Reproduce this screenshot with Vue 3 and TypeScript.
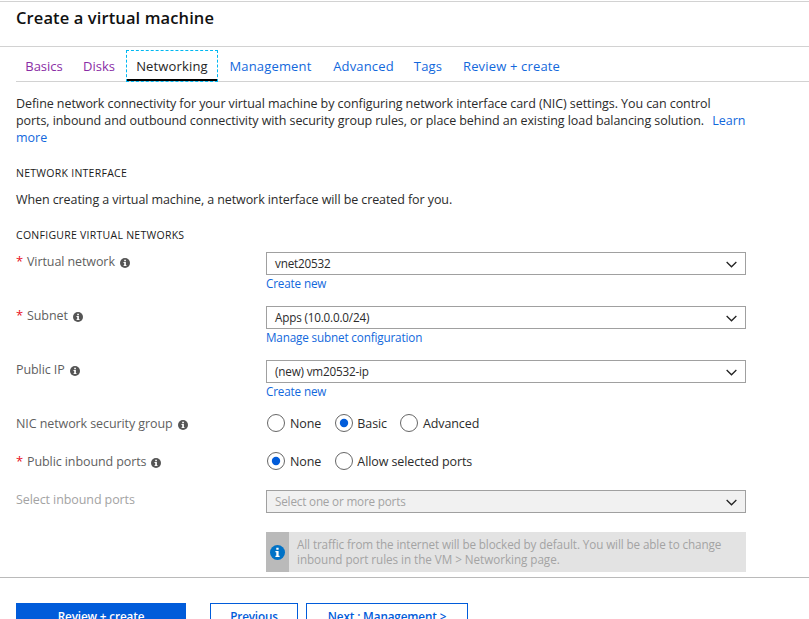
<script setup lang="ts">
import { ref } from 'vue'

interface Tab { label: string; width: number; state: 'visited' | 'current' | 'link' }
interface SelectField { label: string; required: boolean; value: string; link: string }
interface RadioField { label: string; required: boolean; name: string; options: string[] }

const tabs: Tab[] = [
  { label: 'Basics', width: 56, state: 'visited' },
  { label: 'Disks', width: 54, state: 'visited' },
  { label: 'Networking', width: 92, state: 'current' },
  { label: 'Management', width: 105, state: 'link' },
  { label: 'Advanced', width: 81, state: 'link' },
  { label: 'Tags', width: 48, state: 'link' },
  { label: 'Review + create', width: 119, state: 'link' },
]

const selects: SelectField[] = [
  { label: 'Virtual network', required: true, value: 'vnet20532', link: 'Create new' },
  { label: 'Subnet', required: true, value: 'Apps (10.0.0.0/24)', link: 'Manage subnet configuration' },
  { label: 'Public IP', required: false, value: '(new) vm20532-ip', link: 'Create new' },
]

const radios: RadioField[] = [
  { label: 'NIC network security group', required: false, name: 'nsg', options: ['None', 'Basic', 'Advanced'] },
  { label: 'Public inbound ports', required: true, name: 'ports', options: ['None', 'Allow selected ports'] },
]

const chosen = ref<Record<string, string>>({ nsg: 'Basic', ports: 'None' })
</script>

<template>
  <div class="page">
    <header class="title"><h1>Create a virtual machine</h1></header>

    <nav class="tabs">
      <a v-for="t in tabs" :key="t.label" class="tab" :class="t.state" :style="{ width: t.width + 'px' }">{{ t.label }}</a>
    </nav>

    <main class="content">
      <p class="intro">
        Define network connectivity for your virtual machine by configuring network interface card (NIC) settings. You can control<br>
        ports, inbound and outbound connectivity with security group rules, or place behind an existing load balancing solution.
        <a class="learn">Learn<br>more</a>
      </p>

      <h2 class="first">NETWORK INTERFACE</h2>
      <p class="note">When creating a virtual machine, a network interface will be created for you.</p>
      <h2 class="second">CONFIGURE VIRTUAL NETWORKS</h2>

      <div v-for="f in selects" :key="f.label" class="row select-row">
        <div class="label">
          <span v-if="f.required" class="star">*</span>
          <span>{{ f.label }}</span>
          <svg class="info" viewBox="0 0 10 10"><circle cx="5" cy="5" r="5" /><path d="M4.2 1.7h1.7v1.5H4.2zM3.5 4h2.4v3.2h.7v.9H3.5v-.9h.7V4.9h-.7z" /></svg>
        </div>
        <div class="control">
          <div class="select">
            <span>{{ f.value }}</span>
            <svg class="chevron" viewBox="0 0 12 7"><path d="M.7.8 6 6 11.3.8" /></svg>
          </div>
          <a class="sub">{{ f.link }}</a>
        </div>
      </div>

      <div v-for="f in radios" :key="f.label" class="row radio-row">
        <div class="label">
          <span v-if="f.required" class="star">*</span>
          <span>{{ f.label }}</span>
          <svg class="info" viewBox="0 0 10 10"><circle cx="5" cy="5" r="5" /><path d="M4.2 1.7h1.7v1.5H4.2zM3.5 4h2.4v3.2h.7v.9H3.5v-.9h.7V4.9h-.7z" /></svg>
        </div>
        <div class="control radios">
          <div v-for="o in f.options" :key="o" class="option" @click="chosen[f.name] = o">
            <svg class="radio" viewBox="0 0 18 18">
              <circle class="ring" cx="9" cy="9" r="8.5" />
              <circle v-if="chosen[f.name] === o" class="dot" cx="9" cy="9" r="4.2" />
            </svg>
            <span>{{ o }}</span>
          </div>
        </div>
      </div>

      <div class="row disabled">
        <div class="label">Select inbound ports</div>
        <div class="control">
          <div class="select">
            <span>Select one or more ports</span>
            <svg class="chevron" viewBox="0 0 12 7"><path d="M.7.8 6 6 11.3.8" /></svg>
          </div>
          <div class="notice">
            <div class="notice-icon">
              <svg viewBox="0 0 15 15"><circle cx="7.5" cy="7.5" r="7.5" /><path d="M6.3 2.7h2.3v2H6.3zM5.4 5.9h3.2v4.9h1v1.3H5.4v-1.3h.9V7.2h-.9z" /></svg>
            </div>
            <p>All traffic from the internet will be blocked by default. You will be able to change<br><span class="rules">inbound port rules in the VM &gt; Networking page.</span></p>
          </div>
        </div>
      </div>
    </main>

    <footer class="footer">
      <button class="primary">Review + create</button>
      <button class="prev">Previous</button>
      <button class="next">Next : Management &gt;</button>
    </footer>
  </div>
</template>

<style>
body { background: #fff; overflow: hidden; }
</style>

<style scoped>
* { box-sizing: border-box; }
.page {
  height: 619px; padding-top: 1px; overflow: hidden; display: flex; flex-direction: column;
  font: 12.5px/17px "Open Sans", sans-serif; letter-spacing: -0.075px; color: #2b2b2b; white-space: nowrap;
}
h1, h2, p { margin: 0; font-weight: 400; }
a { color: #1268dc; }
.title { flex: none; height: 46px; padding: 6px 16px; border-top: 1px solid #d2d2d2; border-bottom: 1px solid #d2d2d2; }
h1 { font-size: 16.5px; line-height: 20px; font-weight: 600; letter-spacing: 0.11px; color: #111; }
.tabs { flex: none; height: 35px; margin-left: 16px; padding-top: 3px; border-bottom: 1px solid #d2d2d2; display: flex; }
.tab { flex: none; height: 31px; border: 1px solid transparent; text-align: center; font-size: 13px; line-height: 30px; letter-spacing: 0.16px; }
.visited { color: #8a2da5; letter-spacing: 0; }
.current { height: 32px; color: #252525; border: 1px dashed #00b7f1; box-shadow: inset 0 -2px #000; }
.content { flex: none; height: 495px; padding: 13px 16px 0; }
.intro { height: 51px; }
.learn { margin-left: 5px; letter-spacing: 0; }
h2 { font-size: 10.5px; line-height: 16px; letter-spacing: 0.27px; color: #1a1a1a; }
.first { margin-top: 19px; }
.note { margin-top: 10px; letter-spacing: -0.09px; }
.second { margin-top: 19px; }
.row { display: grid; grid-template-columns: 250px 480px; }
.select-row { height: 54px; }
.second + .row { margin-top: 9px; }
.label { display: flex; align-items: flex-start; color: #5f5f5f; height: 17px; letter-spacing: -0.09px; padding-top: 1px; }
.star { width: 11px; color: #e81123; font-size: 13px; line-height: 16px; }
.info { width: 10px; height: 10px; margin: 5px 0 0 5px; fill: #555; }
.info path, .notice-icon path { fill: #fff; }
.select { height: 23px; border: 1px solid #a0a0a0; display: flex; justify-content: space-between; align-items: center; padding: 0 8px; font-size: 11.7px; letter-spacing: -0.18px; }
.chevron { width: 11px; height: 7px; margin-top: 2px; fill: none; stroke: #222; stroke-width: 1.4; }
.sub { display: block; font-size: 11.7px; line-height: 17px; letter-spacing: -0.15px; }
.radio-row { height: 38px; }
.radios { display: flex; padding-left: 1px; }
.option { display: flex; align-items: center; height: 18px; margin-right: 14px; }
.option + .option { margin-right: 13px; letter-spacing: -0.1px; }
.option + .option .radio { margin-right: 4px; }
.option + .option + .option .radio { margin-right: 5px; }
.radio { width: 18px; height: 18px; margin-right: 5px; fill: none; }
.ring { stroke: #666; stroke-width: 1; }
.dot { fill: #015cda; }
.disabled .label, .disabled .select, .disabled p { color: #a3a3a3; }
.disabled .select { background: #f1f1f1; }
.notice { height: 40px; margin-top: 19px; background: #e3e3e3; display: flex; }
.notice-icon { width: 23px; background: #bababa; display: flex; align-items: center; justify-content: center; }
.notice-icon svg { width: 15px; height: 15px; fill: #0072c6; }
.notice p { padding: 5px 0 0 8px; font-size: 11.7px; line-height: 15px; letter-spacing: -0.11px; }
.rules { letter-spacing: -0.05px; }
.footer { flex: none; height: 42px; border-top: 1px solid #bababa; padding: 25px 16px 0; display: flex; }
button { height: 26px; padding: 0; border: 1px solid #015cda; background: #fff; color: #015cda; font: 600 11.7px/24px "Open Sans", sans-serif; letter-spacing: -0.13px; }
.primary { width: 170px; background: #015cda; color: #fff; margin-right: 24px; }
.prev { width: 88px; margin-right: 8px; }
.next { width: 162px; }
</style>
